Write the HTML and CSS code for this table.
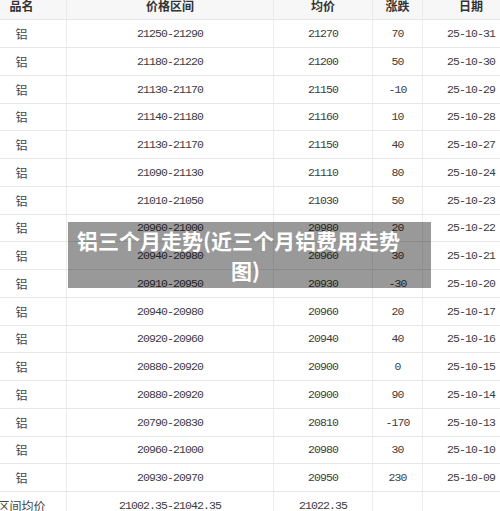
FILE: index.html
```html
<!DOCTYPE html>
<html lang="zh-CN">
<head>
<meta charset="utf-8">
<title>铝三个月走势</title>
<link rel="stylesheet" href="styles.css">
</head>
<body>
<div class="page">
  <div class="sheet">
    <div class="row head">
      <div class="cell">品名</div>
      <div class="cell">价格区间</div>
      <div class="cell">均价</div>
      <div class="cell">涨跌</div>
      <div class="cell">日期</div>
    </div>
    <div class="row"><div class="cell cn">铝</div><div class="cell num">21250-21290</div><div class="cell num">21270</div><div class="cell num">70</div><div class="cell num">25-10-31</div></div>
    <div class="row"><div class="cell cn">铝</div><div class="cell num">21180-21220</div><div class="cell num">21200</div><div class="cell num">50</div><div class="cell num">25-10-30</div></div>
    <div class="row"><div class="cell cn">铝</div><div class="cell num">21130-21170</div><div class="cell num">21150</div><div class="cell num">-10</div><div class="cell num">25-10-29</div></div>
    <div class="row"><div class="cell cn">铝</div><div class="cell num">21140-21180</div><div class="cell num">21160</div><div class="cell num">10</div><div class="cell num">25-10-28</div></div>
    <div class="row"><div class="cell cn">铝</div><div class="cell num">21130-21170</div><div class="cell num">21150</div><div class="cell num">40</div><div class="cell num">25-10-27</div></div>
    <div class="row"><div class="cell cn">铝</div><div class="cell num">21090-21130</div><div class="cell num">21110</div><div class="cell num">80</div><div class="cell num">25-10-24</div></div>
    <div class="row"><div class="cell cn">铝</div><div class="cell num">21010-21050</div><div class="cell num">21030</div><div class="cell num">50</div><div class="cell num">25-10-23</div></div>
    <div class="row"><div class="cell cn">铝</div><div class="cell num">20960-21000</div><div class="cell num">20980</div><div class="cell num">20</div><div class="cell num">25-10-22</div></div>
    <div class="row"><div class="cell cn">铝</div><div class="cell num">20940-20980</div><div class="cell num">20960</div><div class="cell num">30</div><div class="cell num">25-10-21</div></div>
    <div class="row"><div class="cell cn">铝</div><div class="cell num">20910-20950</div><div class="cell num">20930</div><div class="cell num">-30</div><div class="cell num">25-10-20</div></div>
    <div class="row"><div class="cell cn">铝</div><div class="cell num">20940-20980</div><div class="cell num">20960</div><div class="cell num">20</div><div class="cell num">25-10-17</div></div>
    <div class="row"><div class="cell cn">铝</div><div class="cell num">20920-20960</div><div class="cell num">20940</div><div class="cell num">40</div><div class="cell num">25-10-16</div></div>
    <div class="row"><div class="cell cn">铝</div><div class="cell num">20880-20920</div><div class="cell num">20900</div><div class="cell num">0</div><div class="cell num">25-10-15</div></div>
    <div class="row"><div class="cell cn">铝</div><div class="cell num">20880-20920</div><div class="cell num">20900</div><div class="cell num">90</div><div class="cell num">25-10-14</div></div>
    <div class="row"><div class="cell cn">铝</div><div class="cell num">20790-20830</div><div class="cell num">20810</div><div class="cell num">-170</div><div class="cell num">25-10-13</div></div>
    <div class="row"><div class="cell cn">铝</div><div class="cell num">20960-21000</div><div class="cell num">20980</div><div class="cell num">30</div><div class="cell num">25-10-10</div></div>
    <div class="row"><div class="cell cn">铝</div><div class="cell num">20930-20970</div><div class="cell num">20950</div><div class="cell num">230</div><div class="cell num">25-10-09</div></div>
    <div class="row"><div class="cell cn">区间均价</div><div class="cell num">21002.35-21042.35</div><div class="cell num">21022.35</div><div class="cell num"></div><div class="cell num"></div></div>
  </div>
  <div class="caption">铝三个月走势(近三个月铝费用走势图)</div>
</div>
</body>
</html>
```
FILE: styles.css
```css
html, body {
  margin: 0;
  padding: 0;
  background: #ffffff;
}

body {
  width: 500px;
  height: 511px;
  overflow: hidden;
  font-family: "Noto Sans CJK SC", "Liberation Sans", sans-serif;
}

.page {
  position: relative;
  width: 500px;
  height: 511px;
  overflow: hidden;
}

.sheet {
  width: 543px;
  margin-left: -23px;
  margin-top: -7.5px;
}

.row {
  display: grid;
  grid-template-columns: 90px 207px 99px 50px 97px;
  height: 27.75px;
  box-sizing: border-box;
  border-bottom: 1px solid #e8e8e8;
}

.head {
  background: #f7f7f7;
}

.cell {
  display: flex;
  align-items: center;
  justify-content: center;
  box-sizing: border-box;
  border-right: 1px solid #ececec;
  white-space: nowrap;
  color: #444444;
}

.head .cell {
  font-family: "Noto Sans CJK SC", sans-serif;
  font-weight: 700;
  font-size: 12px;
  color: #333333;
}

.cn {
  font-family: "Noto Sans CJK SC", sans-serif;
  font-size: 12px;
  color: #444444;
}

.num {
  font-family: "Liberation Mono", "DejaVu Sans Mono", monospace;
  font-size: 11.5px;
  letter-spacing: -0.9px;
  color: #3c3c3c;
}

.caption {
  position: absolute;
  left: 68px;
  top: 222px;
  width: 363px;
  height: 66px;
  box-sizing: border-box;
  padding: 3px 17px 3px 9px;
  background: rgba(0, 0, 0, 0.4);
  color: #ffffff;
  font-family: "Noto Sans CJK SC", sans-serif;
  font-weight: 700;
  font-size: 21px;
  line-height: 30px;
  text-align: left;
  text-align-last: center;
  word-break: break-all;
}
```
